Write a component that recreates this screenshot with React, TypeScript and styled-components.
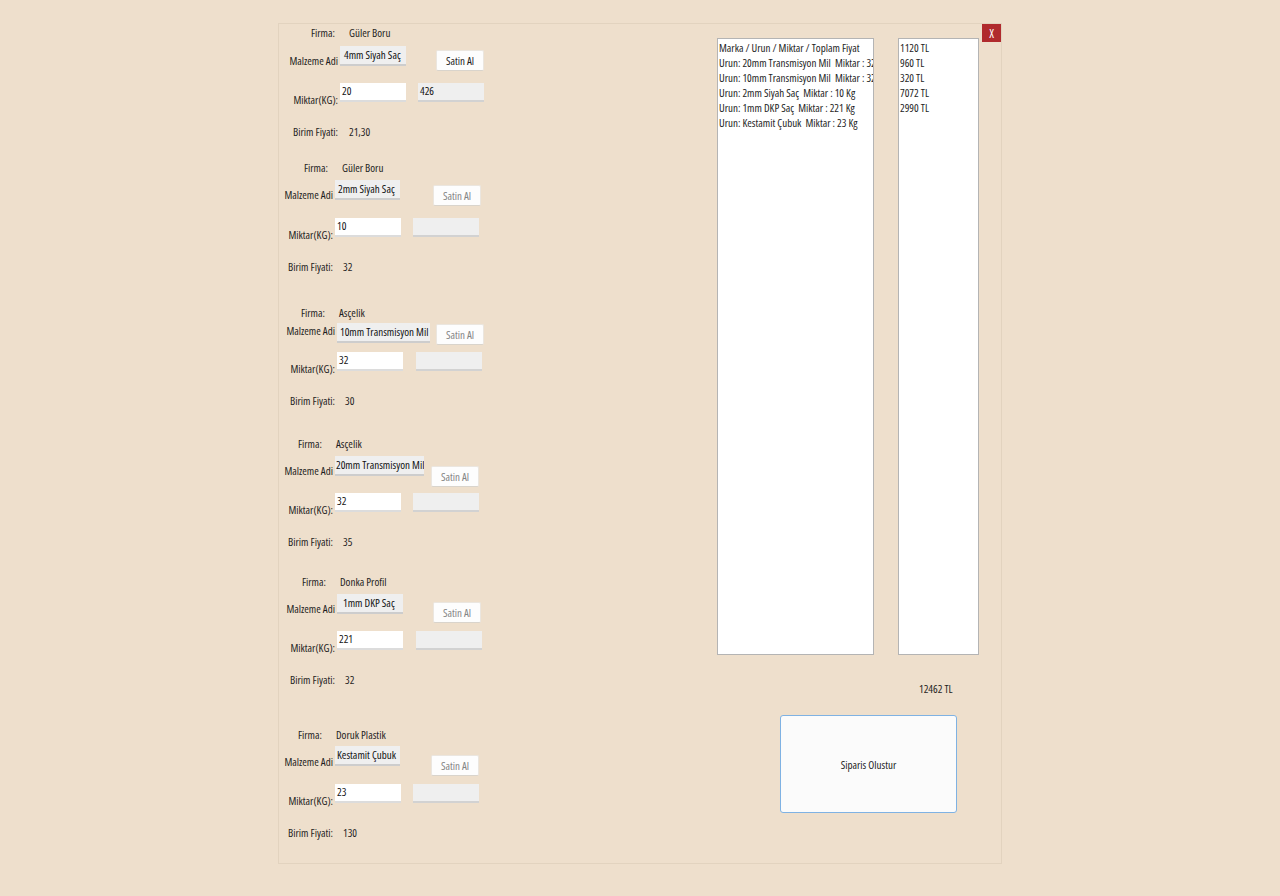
import React from "react";
import styled, { createGlobalStyle } from "styled-components";

const Global = createGlobalStyle`
  html, body { margin: 0; padding: 0; background: #eedfcc; }
  body {
    font-family: "Open Sans", "Noto Sans", sans-serif;
    font-stretch: 75%;
    font-weight: 380;
    font-size: 11px;
    color: #1e1e1e;
  }
`;

const Panel = styled.div`
  width: 722px;
  height: 839px;
  margin: 23px auto 0;
  border: 1px solid #e2d3bf;
  display: flex;
  align-items: flex-start;
`;

const LeftCol = styled.div`
  display: flex;
  flex-direction: column;
  width: 220px;
`;

const Block = styled.div<{ $mx: number; $mt: number }>`
  display: flex;
  flex-direction: column;
  margin-left: ${(p) => p.$mx}px;
  margin-top: ${(p) => p.$mt}px;
`;

const FirmaRow = styled.div<{ $fx: number; $gap: number }>`
  display: grid;
  grid-template-columns: ${(p) => 56 + p.$fx - 12}px auto;
  column-gap: 12px;
  height: 16px;
  line-height: 16px;
  margin-bottom: ${(p) => p.$gap}px;
`;

const Label = styled.span<{ $mt?: number }>`
  justify-self: end;
  white-space: nowrap;
  line-height: 15px;
  padding-right: 2px;
  margin-top: ${(p) => p.$mt ?? 0}px;
`;

const Value = styled.span`
  white-space: nowrap;
`;

const MalzemeRow = styled.div<{ $h: number; $bx: number }>`
  display: grid;
  grid-template-columns: 56px ${(p) => p.$bx}px auto;
  align-items: start;
  height: ${(p) => p.$h}px;
`;

const MatBox = styled.div<{ $w: number; $pad: number }>`
  width: ${(p) => p.$w}px;
  height: 20px;
  line-height: 18px;
  padding-left: ${(p) => p.$pad}px;
  box-sizing: border-box;
  background: #efefef;
  border-bottom: 2px solid #cdcdcd;
  white-space: nowrap;
  overflow: hidden;
  color: #111;
`;

const BuyButton = styled.div<{ $my: number; $on: boolean }>`
  margin-top: ${(p) => p.$my}px;
  width: 48px;
  height: 21px;
  box-sizing: border-box;
  background: #fdfdfd;
  border: 1px solid #ebe6df;
  border-bottom-color: #d9d4cc;
  border-radius: 2px;
  display: flex;
  align-items: center;
  justify-content: center;
  color: ${(p) => (p.$on ? "#1e1e1e" : "#858585")};
`;

const MiktarRow = styled.div<{ $gx: number }>`
  display: grid;
  grid-template-columns: 56px ${(p) => p.$gx}px auto;
  align-items: start;
  height: 41px;
`;

const Field = styled.div<{ $gray?: boolean }>`
  width: 66px;
  height: 19px;
  box-sizing: border-box;
  padding: 0 0 0 2px;
  line-height: 15px;
  background: ${(p) => (p.$gray ? "#efefef" : "#ffffff")};
  border-bottom: 2px solid ${(p) => (p.$gray ? "#d2d2d2" : "#dcdcdc")};
  color: #111;
`;

const BirimRow = styled.div<{ $vx: number }>`
  display: grid;
  grid-template-columns: 56px auto;
  column-gap: ${(p) => p.$vx}px;
  height: 15px;
  line-height: 15px;
`;

const RightCol = styled.div`
  margin-left: auto;
  display: flex;
  flex-direction: column;
  width: 284px;
`;

const TopRow = styled.div`
  display: flex;
  align-items: flex-start;
`;

const ListBox = styled.div<{ $w: number; $ml?: number }>`
  margin-top: 14px;
  margin-left: ${(p) => p.$ml ?? 0}px;
  width: ${(p) => p.$w}px;
  height: 617px;
  box-sizing: border-box;
  background: #fff;
  border: 1px solid #b4b4b4;
  padding: 1px 0 0 1px;
  overflow: hidden;
`;

const ListItem = styled.div`
  line-height: 15px;
  white-space: pre;
`;

const CloseButton = styled.div`
  margin-left: auto;
  width: 19px;
  height: 18px;
  background: #b02a2d;
  color: #fff;
  font-size: 12px;
  display: flex;
  align-items: center;
  justify-content: center;
`;

const Total = styled.div`
  margin: 26px 0 0 202px;
  line-height: 15px;
`;

const OrderButton = styled.div`
  margin: 19px 0 0 63px;
  width: 177px;
  height: 98px;
  box-sizing: border-box;
  background: #fbfbfb;
  border: 1px solid #7fb2e3;
  border-radius: 3px;
  display: flex;
  align-items: center;
  justify-content: center;
`;

type B = {
  mx: number; mt: number; fx: number; firma: string; mat: string; matW: number; pad: number;
  gap: number; mRow: number; lbl: number; btnX: number; btnY: number; grayX: number;
  qty: string; total: string; price: string; vx: number; on: boolean;
};

const blocks: B[] = [
  { mx: 5, mt: 1, fx: 9, firma: "Güler Boru", mat: "4mm Siyah Saç", matW: 66, pad: 4, gap: 5, mRow: 37, lbl: 7, btnX: 96, btnY: 4, grayX: 78, qty: "20", total: "426", price: "21,30", vx: 9, on: true },
  { mx: 0, mt: 21, fx: 7, firma: "Güler Boru", mat: "2mm Siyah Saç", matW: 65, pad: 3, gap: 4, mRow: 38, lbl: 7, btnX: 98, btnY: 5, grayX: 78, qty: "10", total: "", price: "32", vx: 8, on: false },
  { mx: 2, mt: 31, fx: 2, firma: "Asçelik", mat: "10mm Transmisyon Mil", matW: 93, pad: 3, gap: 2, mRow: 29, lbl: 0, btnX: 99, btnY: 1, grayX: 79, qty: "32", total: "", price: "30", vx: 8, on: false },
  { mx: 0, mt: 28, fx: 1, firma: "Asçelik", mat: "20mm Transmisyon Mil", matW: 89, pad: 1, gap: 4, mRow: 37, lbl: 7, btnX: 96, btnY: 10, grayX: 78, qty: "32", total: "", price: "35", vx: 8, on: false },
  { mx: 2, mt: 25, fx: 3, firma: "Donka Profil", mat: "1mm DKP Saç", matW: 66, pad: 6, gap: 4, mRow: 37, lbl: 7, btnX: 96, btnY: 8, grayX: 79, qty: "221", total: "", price: "32", vx: 8, on: false },
  { mx: 0, mt: 40, fx: 1, firma: "Doruk Plastik", mat: "Kestamit Çubuk", matW: 65, pad: 2, gap: 3, mRow: 38, lbl: 8, btnX: 96, btnY: 9, grayX: 78, qty: "23", total: "", price: "130", vx: 8, on: false },
];

const items = [
  "Marka / Urun / Miktar / Toplam Fiyat",
  "Urun: 20mm Transmisyon Mil  Miktar : 32 Kg",
  "Urun: 10mm Transmisyon Mil  Miktar : 32 Kg",
  "Urun: 2mm Siyah Saç  Miktar : 10 Kg",
  "Urun: 1mm DKP Saç  Miktar : 221 Kg",
  "Urun: Kestamit Çubuk  Miktar : 23 Kg",
];

const prices = ["1120 TL", "960 TL", "320 TL", "7072 TL", "2990 TL"];

export default function App() {
  return (
    <>
      <Global />
      <Panel>
        <LeftCol>
          {blocks.map((b, i) => (
            <Block key={i} $mx={b.mx} $mt={b.mt}>
              <FirmaRow $fx={b.fx} $gap={b.gap}>
                <Label>Firma:</Label>
                <Value>{b.firma}</Value>
              </FirmaRow>
              <MalzemeRow $h={b.mRow} $bx={b.btnX}>
                <Label $mt={b.lbl}>Malzeme Adi</Label>
                <MatBox $w={b.matW} $pad={b.pad}>{b.mat}</MatBox>
                <BuyButton $my={b.btnY} $on={b.on}>Satin Al</BuyButton>
              </MalzemeRow>
              <MiktarRow $gx={b.grayX}>
                <Label $mt={9}>Miktar(KG):</Label>
                <Field>{b.qty}</Field>
                <Field $gray>{b.total}</Field>
              </MiktarRow>
              <BirimRow $vx={b.vx}>
                <Label>Birim Fiyati:</Label>
                <Value>{b.price}</Value>
              </BirimRow>
            </Block>
          ))}
        </LeftCol>
        <RightCol>
          <TopRow>
            <ListBox $w={157}>
              {items.map((t) => (
                <ListItem key={t}>{t}</ListItem>
              ))}
            </ListBox>
            <ListBox $w={81} $ml={24}>
              {prices.map((t) => (
                <ListItem key={t}>{t}</ListItem>
              ))}
            </ListBox>
            <CloseButton>X</CloseButton>
          </TopRow>
          <Total>12462 TL</Total>
          <OrderButton>Siparis Olustur</OrderButton>
        </RightCol>
      </Panel>
    </>
  );
}
